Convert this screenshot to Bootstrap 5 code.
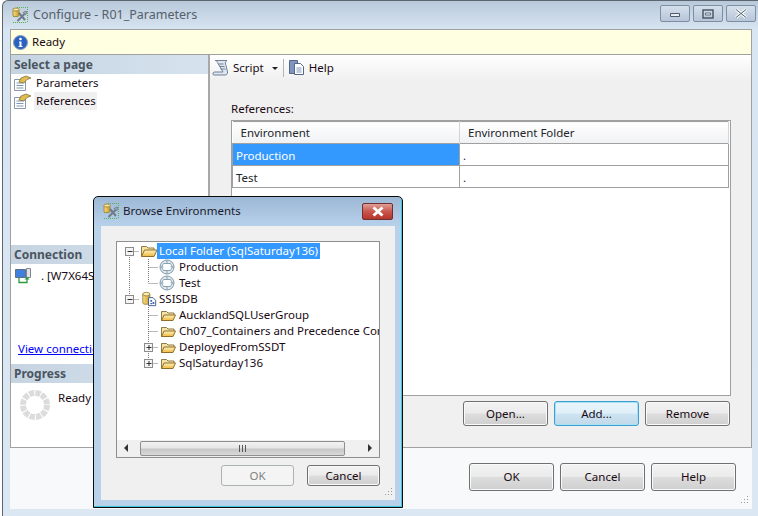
<!DOCTYPE html>
<html lang="en">
<head>
    <meta charset="UTF-8">
    <meta name="viewport" content="width=device-width, initial-scale=1.0">
    <link href="https://cdn.jsdelivr.net/npm/bootstrap@5.3.0/dist/css/bootstrap.min.css" rel="stylesheet">
    <style>
        html, body { width: 758px; height: 516px; overflow: hidden; background: #fff; }
        body { font-family: "Noto Sans", "Open Sans", sans-serif; font-size: 11.5px; line-height: 16px; color: #1a0a14; }

        /* main window */
        .cfg-win { position: relative; width: 756px; height: 516px; margin-left: 2px; padding: 0 6px 7px 7px; border-left: 1px solid #5c6670; border-top: 1px solid #5c6670; border-top-left-radius: 6px; background: linear-gradient(#b9c9da 0, #d8e5f2 29px, #dbe7f3 100%); }
        .cfg-title { height: 28px; padding-left: 2px; color: #55606a; font-size: 12.5px; }
        .caption-btn { width: 30px; height: 17px; border: 1px solid #7f8fa3; border-radius: 2px; background: linear-gradient(#d6e0ec, #b6c5d8); padding: 0; }
        .caption-wrap { gap: 3px; margin-right: -4px; margin-top: -3px; }
        .status-bar { height: 26px; padding-left: 2px; gap: 4px; background: #ffffe1; border: 1px solid #a0a0a0; }
        .cfg-body { height: 393px; background: #f0f0f0; border-left: 1px solid #a0a0a0; border-right: 1px solid #a0a0a0; border-bottom: 1px solid #a0a0a0; }
        .side-pane { width: 199px; background: #fff; border-right: 2px solid #a8a8a8; }
        .pane-head { height: 19px; padding-left: 3px; font-weight: 700; font-size: 12px; line-height: 19px; color: #4a5560; background: linear-gradient(90deg, #c6d4e2, #d6e3ef); }
        .page-row { height: 18px; padding-left: 3px; gap: 5px; }
        .page-row.active-page span { background: #f0f0f0; padding: 1px 1px 1px 2px; margin-left: -2px; }
        .conn-block { height: 100px; padding: 4px 4px 7px 4px; }
        .conn-link { color: #0000ff; text-decoration: underline; margin-left: 3px; white-space: nowrap; }
        .prog-block { height: 64px; padding: 7px 0 0 9px; gap: 8px; }
        .tool-bar { height: 25px; padding-left: 2px; background: linear-gradient(#ffffff, #f0f0f0); }
        .tool-sep { width: 1px; height: 18px; background: #b4b4b4; margin: 0 4px 0 5px; }
        .tool-caret { width: 0; height: 0; border-left: 3px solid transparent; border-right: 3px solid transparent; border-top: 3px solid #222; margin-left: 8px; margin-top: 2px; }
        .form-pane { padding: 21px 20px 0 21px; }
        .refs-box { height: 276px; margin-top: 3px; background: #fff; border: 1px solid #a0a0a0; }
        .refs-table { table-layout: fixed; width: 497px; margin: 0 0 0 0; font-size: inherit; border-collapse: collapse; }
        .refs-table th { height: 22px; padding: 0 0 0 8px; font-weight: 400; background: linear-gradient(#ffffff, #f0f1f3); border: 0; border-top: 1px solid #a0a0a0; border-right: 1px solid #d5d5d5; vertical-align: middle; color: inherit; }
        .refs-table td { height: 22px; padding: 2px 0 0 3px; border: 1px solid #a0a0a0; border-left: 1px solid #a0a0a0; vertical-align: middle; color: inherit; background: #fff; }
        .refs-table td:first-child { border-left: 1px solid #a0a0a0; }
        .refs-table td.row-sel { background: #3399ff; color: #fff; }
        .win-btn { width: 85px; height: 25px; padding: 0; font-size: inherit; line-height: 1; color: #1a0a14; border: 1px solid #707070; border-radius: 3px; background: linear-gradient(#f3f3f3 0, #ebebeb 48%, #dddddd 52%, #cfcfcf 100%); box-shadow: inset 0 0 0 1px #fafafa; }
        .win-btn.is-default { border-color: #3c9fd0; box-shadow: inset 0 0 0 1px #a8e0f4; background: linear-gradient(#eaf5fb 0, #e0eff8 48%, #cde4f2 52%, #c0d8e8 100%); }
        .win-btn:disabled { opacity: 1; color: #838383; border-color: #adb2b5; background: #f4f4f4; box-shadow: none; }
        .btn-row { margin-top: 5px; gap: 6px; padding-right: 1px; }
        .cfg-foot { padding: 15px 16px 0 0; gap: 6px; }
        .cfg-foot .win-btn { height: 28px; }
        .grip { position: absolute; right: 0; bottom: 0; }

        /* browse dialog */
        .browse-dlg { position: absolute; left: 90px; top: 195px; width: 310px; height: 312px; padding: 0 7px 7px 7px; border: 1px solid #0c0c0c; border-top-left-radius: 5px; border-top-right-radius: 5px; background: linear-gradient(#9db8d5 0, #b9d2ec 30px, #b9d2ec 100%); box-shadow: inset -1px -1px 0 #39c8e0; }
        .dlg-title { height: 29px; padding-left: 2px; gap: 3px; color: #1a1a2a; }
        .dlg-close { width: 31px; height: 17px; border: 1px solid #6e3030; border-radius: 2px; background: linear-gradient(#e0a097, #c9564c 50%, #b5352c); padding: 0; margin-right: 2px; }
        .dlg-body { position: relative; height: 275px; padding: 15px 15px 0 15px; background: #f0f0f0; }
        .tree-box { height: 217px; background: #fff; border: 1px solid #8e8f8f; padding-top: 1px; }
        .tree-list { height: 197px; overflow: hidden; white-space: nowrap; }
        .tree-row { height: 16px; line-height: 16px; }
        .tree-row svg { flex: none; display: block; }
        .tree-sel { background: #3399ff; color: #fff; padding: 0 2px; margin-left: -2px; }
        .hscroll { height: 17px; margin: 0 0 0 0; padding: 0 4px; background: #f0f0f0; gap: 0; }
        .hthumb { width: 205px; height: 15px; margin-left: 12px; border: 1px solid #8e8f8f; border-radius: 2px; background: linear-gradient(#f2f2f2 0, #e6e6e6 45%, #c8c8c8 55%, #d8d8d8 100%); }
        .arr-l, .arr-r { width: 0; height: 0; border-top: 4px solid transparent; border-bottom: 4px solid transparent; }
        .arr-l { border-right: 4px solid #333; margin-left: 3px; }
        .arr-r { border-left: 4px solid #333; margin-left: auto; margin-right: 3px; }
        .dlg-btns { margin-top: 7px; gap: 13px; }
        .dlg-btns .win-btn { width: 73px; height: 21px; }
    </style>
</head>
<body>
    <!-- shared icons -->
    <svg width="0" height="0" class="position-absolute">
        <defs>
            <linearGradient id="foldGrad" x1="0" y1="0" x2="0" y2="1"><stop offset="0" stop-color="#fff3c0"/><stop offset="1" stop-color="#f0b93c"/></linearGradient>
            <linearGradient id="cylGrad" x1="0" y1="0" x2="1" y2="0"><stop offset="0" stop-color="#f8df80"/><stop offset="1" stop-color="#c99a2e"/></linearGradient>
        </defs>
        <symbol id="ico-folder-open" viewBox="0 0 18 16">
            <path d="M1.5 13.5V3.5h5l1.5 1.5h6v2" fill="#f7e3a0" stroke="#8d7a4a"/>
            <path d="M1.5 13.5l3-6.5h12.5l-3 6.5z" fill="url(#foldGrad)" stroke="#8d6f2a"/>
        </symbol>
        <symbol id="ico-folder" viewBox="0 0 18 16">
            <path d="M2.500 13.500V4.500h5l1.500 1.500h6v2" fill="#f7e3a0" stroke="#8d7a4a"/>
            <path d="M2.500 13.500l2.500-5.500h11.500l-2.500 5.500z" fill="url(#foldGrad)" stroke="#8d6f2a"/>
        </symbol>
        <symbol id="ico-env" viewBox="0 0 16 16">
            <circle cx="8" cy="8" r="7" fill="#dfeaf0" stroke="#7f98a8"/>
            <path d="M4.500 4.500h7l2 3.500-2 3.500h-7l-2-3.500zM1.500 8h3M11.500 8h3M8 1v3.500M8 11.500v3.500" fill="#fff" stroke="#8aa2b0"/>
        </symbol>
        <symbol id="ico-db" viewBox="0 0 18 18">
            <path d="M2 3.500v10c0 2 8 2 8 0v-10z" fill="url(#cylGrad)" stroke="#9b8440"/>
            <ellipse cx="6" cy="3.500" rx="4" ry="2" fill="#fbeeb4" stroke="#9b8440"/>
            <path d="M8.500 7.500h5l3 3v6h-8z" fill="#fff" stroke="#33518a"/>
            <path d="M10.500 10h2v2h-2zM13 12.500h2v2h-2zM10.500 13.500h2v1.500h-2z" fill="#3f66b0"/>
        </symbol>
        <symbol id="ico-page" viewBox="0 0 17 16">
            <path d="M.5 4.500h11v11H.5z" fill="#fff" stroke="#8b99a8"/>
            <path d="M2.500 8h7M2.500 10.500h7M2.500 13h7" stroke="#7f97b5"/>
            <path d="M5 7l2-4 5-2 5 2-4 1.500-3 3.500z" fill="#e2bd4c" stroke="#6f6538" stroke-width=".7"/>
        </symbol>
        <symbol id="ico-tools" viewBox="0 0 17 16">
            <path d="M1.500 1v10" stroke="#4fb34f" stroke-dasharray="1 1"/>
            <path d="M1 15.500h14M15.500 2v13M5 .5h11" stroke="#4fb34f" stroke-dasharray="1 1"/>
            <path d="M1 2.500v6c0 1.500 6 1.500 6 0v-6z" fill="url(#cylGrad)" stroke="#a58a35"/>
            <ellipse cx="4" cy="2.500" rx="3" ry="1.500" fill="#fbeeb4" stroke="#a58a35"/>
            <path d="M5.500 14l7-7M7 6l6 7" stroke="#6f7b88" stroke-width="2"/>
            <path d="M11 5.500l3-1.500 1 1-1.500 3z" fill="#9aa5b0" stroke="#5a6570" stroke-width=".6"/>
        </symbol>
    </svg>

    <div class="cfg-win d-flex flex-column">
        <div class="cfg-title d-flex align-items-center">
            <svg width="17" height="16" class="me-1"><use href="#ico-tools"/></svg>
            <span>Configure - R01_Parameters</span>
            <div class="caption-wrap d-flex ms-auto">
                <button class="caption-btn d-flex align-items-center justify-content-center" aria-label="Minimize"><svg width="12" height="8"><path d="M1.500 3.500h9v3h-9z" fill="#e8edf3" stroke="#4f5b69"/></svg></button>
                <button class="caption-btn d-flex align-items-center justify-content-center" aria-label="Maximize"><svg width="12" height="10"><path d="M1 1h10v8H1z" fill="none" stroke="#4f5b69" stroke-width="1.500"/><path d="M3.500 4h5v2h-5z" fill="#e8edf3" stroke="#4f5b69" stroke-width=".8"/></svg></button>
                <button class="caption-btn d-flex align-items-center justify-content-center" aria-label="Close"><svg width="14" height="11"><path d="M2 1.500l10 8M12 1.500l-10 8" stroke="#f2f5f8" stroke-width="3"/><path d="M2 1.500l10 8M12 1.500l-10 8" stroke="#5b6776" stroke-width="1"/></svg></button>
            </div>
        </div>

        <div class="status-bar d-flex align-items-center">
            <svg width="15" height="15"><circle cx="7.500" cy="7.500" r="7" fill="#2a62c4" stroke="#8d9db2"/><circle cx="7.500" cy="4" r="1.300" fill="#fff"/><path d="M6 6.500h2.500v4.500h1v1H5.500v-1h1V7.500H6z" fill="#fff"/></svg>
            <span>Ready</span>
        </div>

        <div class="cfg-body d-flex">
            <div class="side-pane d-flex flex-column">
                <div class="pane-head">Select a page</div>
                <div class="page-row d-flex align-items-center"><svg width="17" height="16"><use href="#ico-page"/></svg><span>Parameters</span></div>
                <div class="page-row active-page d-flex align-items-center"><svg width="17" height="16"><use href="#ico-page"/></svg><span>References</span></div>

                <div class="pane-head mt-auto">Connection</div>
                <div class="conn-block d-flex flex-column">
                    <div class="d-flex align-items-center gap-1">
                        <svg width="18" height="16" class="flex-shrink-0"><path d="M.5 1.500h10v8H.5z" fill="#3f7fe0" stroke="#5f6f85"/><path d="M11.500 .5h4v9h-4z" fill="#dfe3e8" stroke="#7f8894"/><path d="M4 10v4.500h8V11" fill="none" stroke="#2f9a3a" stroke-width="1.300"/><path d="M9.500 11.500L12 8.500l2.500 3z" fill="#2f9a3a"/></svg>
                        <span class="ms-1">. [W7X64S1</span>
                    </div>
                    <a href="#" class="conn-link mt-auto">View connection properties</a>
                </div>

                <div class="pane-head">Progress</div>
                <div class="prog-block d-flex">
                    <svg width="30" height="30" class="flex-shrink-0"><circle cx="15" cy="15" r="12" fill="none" stroke="#dcdcdc" stroke-width="6" stroke-dasharray="5.200 1.080"/></svg>
                    <span>Ready</span>
                </div>
            </div>

            <div class="flex-grow-1 d-flex flex-column">
                <div class="tool-bar d-flex align-items-center">
                    <svg width="17" height="17" class="me-1"><path d="M3 1.500h12c-2 1-2 3-1 5l1.500 6.500c.3 2-1 3-2.500 3H2c-1.500 0-1.500-2 0-3h9L5.500 3.500C5 2 4 1.500 3 1.500z" fill="#dfe6ef" stroke="#6f8199"/><path d="M6.500 5h5M7.500 7.500h5M8.500 10h5" stroke="#6f8199"/></svg>
                    <span>Script</span>
                    <span class="tool-caret"></span>
                    <span class="tool-sep"></span>
                    <svg width="17" height="17" class="me-1"><path d="M1.500 1.500h8v13h-8z" fill="#7f95bb" stroke="#55688a"/><path d="M6.500 4.500h6l3 3v8h-9z" fill="#fff" stroke="#55688a"/><path d="M8.500 9h5M8.500 11h5M8.500 13h5" stroke="#7f95bb"/></svg>
                    <span>Help</span>
                </div>
                <div class="form-pane">
                    <div>References:</div>
                    <div class="refs-box">
                        <table class="table refs-table">
                            <colgroup><col style="width:227px"><col></colgroup>
                            <thead><tr><th>Environment</th><th>Environment Folder</th></tr></thead>
                            <tbody>
                                <tr><td class="row-sel">Production</td><td>.</td></tr>
                                <tr><td>Test</td><td>.</td></tr>
                            </tbody>
                        </table>
                    </div>
                    <div class="btn-row d-flex justify-content-end">
                        <button class="btn win-btn">Open...</button>
                        <button class="btn win-btn is-default">Add...</button>
                        <button class="btn win-btn">Remove</button>
                    </div>
                </div>
            </div>
        </div>

        <div class="cfg-foot flex-grow-1 d-flex justify-content-end bg-body-tertiary">
            <button class="btn win-btn">OK</button>
            <button class="btn win-btn">Cancel</button>
            <button class="btn win-btn">Help</button>
        </div>

        <svg class="grip" width="12" height="12" style="right:8px;bottom:9px"><path d="M9 1h1v1H9zM6 4h1v1H6zM9 4h1v1H9zM3 7h1v1H3zM6 7h1v1H6zM9 7h1v1H9z" fill="#9a9a9a"/></svg>

        <!-- Browse Environments dialog -->
        <div class="browse-dlg d-flex flex-column">
            <div class="dlg-title d-flex align-items-center">
                <svg width="17" height="16"><use href="#ico-tools"/></svg>
                <span>Browse Environments</span>
                <button class="dlg-close ms-auto d-flex align-items-center justify-content-center" aria-label="Close"><svg width="14" height="11"><path d="M2.500 1.500l9 8M11.500 1.500l-9 8" stroke="#fff" stroke-width="3"/></svg></button>
            </div>
            <div class="dlg-body">
                <div class="tree-box d-flex flex-column">
                    <div class="tree-list" id="treeList"></div>
                    <div class="hscroll d-flex align-items-center">
                        <span class="arr-l"></span>
                        <div class="hthumb d-flex align-items-center justify-content-center"><svg width="9" height="7"><path d="M1.500 0v7M4.500 0v7M7.500 0v7" stroke="#555"/></svg></div>
                        <span class="arr-r"></span>
                    </div>
                </div>
                <div class="dlg-btns d-flex justify-content-end">
                    <button class="btn win-btn" disabled>OK</button>
                    <button class="btn win-btn" style="margin-right:0">Cancel</button>
                </div>
                <svg class="grip" width="12" height="12" style="right:1px;bottom:1px"><path d="M9 1h1v1H9zM6 4h1v1H6zM9 4h1v1H9zM3 7h1v1H3zM6 7h1v1H6zM9 7h1v1H9z" fill="#9a9a9a"/></svg>
            </div>
        </div>
    </div>

    <script>
        // x positions inside the tree, level 0 and level 1
        const X0 = 12.5, X1 = 31.5;
        const tree = [
            { text: "Local Folder (SqlSaturday136)", level: 0, icon: "folder-open", exp: "-", v0: [8, 16], sel: true },
            { text: "Production", level: 1, icon: "env", v0: [0, 16], v1: [0, 16] },
            { text: "Test", level: 1, icon: "env", v0: [0, 16], v1: [0, 8] },
            { text: "SSISDB", level: 0, icon: "db", exp: "-", v0: [0, 8] },
            { text: "AucklandSQLUserGroup", level: 1, icon: "folder", v1: [0, 16] },
            { text: "Ch07_Containers and Precedence Constraints", level: 1, icon: "folder", v1: [0, 16] },
            { text: "DeployedFromSSDT", level: 1, icon: "folder", exp: "+", v1: [0, 16] },
            { text: "SqlSaturday136", level: 1, icon: "folder", exp: "+", v1: [0, 8] }
        ];

        function vline(x, r) {
            return r ? `<path d="M${x} ${r[0]}V${r[1]}" stroke="#777" stroke-dasharray="1 1"/>` : '';
        }

        function renderTree() {
            const list = document.getElementById('treeList');
            tree.forEach(n => {
                const cx = n.level ? X1 : X0;
                const w = n.level ? 62 : 42;
                let s = vline(X0, n.v0) + vline(X1, n.v1);
                s += `<path d="M${cx} 8.500H${cx + 10}" stroke="#777" stroke-dasharray="1 1"/>`;
                if (n.exp) {
                    s += `<rect x="${cx - 4}" y="4.500" width="8" height="8" fill="#f4f4f4" stroke="#8b8b8b"/>`;
                    s += `<path d="M${cx - 2} 8.500h5" stroke="#333"/>`;
                    if (n.exp === '+') s += `<path d="M${cx + .5} 6v5" stroke="#333"/>`;
                }
                const ix = n.level ? 42 : 23;
                s += `<svg x="${ix}" y="0" width="18" height="16"><use href="#ico-${n.icon}" width="${n.icon === 'env' ? 16 : 18}" height="16"/></svg>`;
                const row = document.createElement('div');
                row.className = 'tree-row d-flex';
                row.innerHTML = `<svg width="${w}" height="16">${s}</svg><span class="${n.sel ? 'tree-sel' : ''}">${n.text}</span>`;
                list.appendChild(row);
            });
        }

        renderTree();
    </script>
</body>
</html>
